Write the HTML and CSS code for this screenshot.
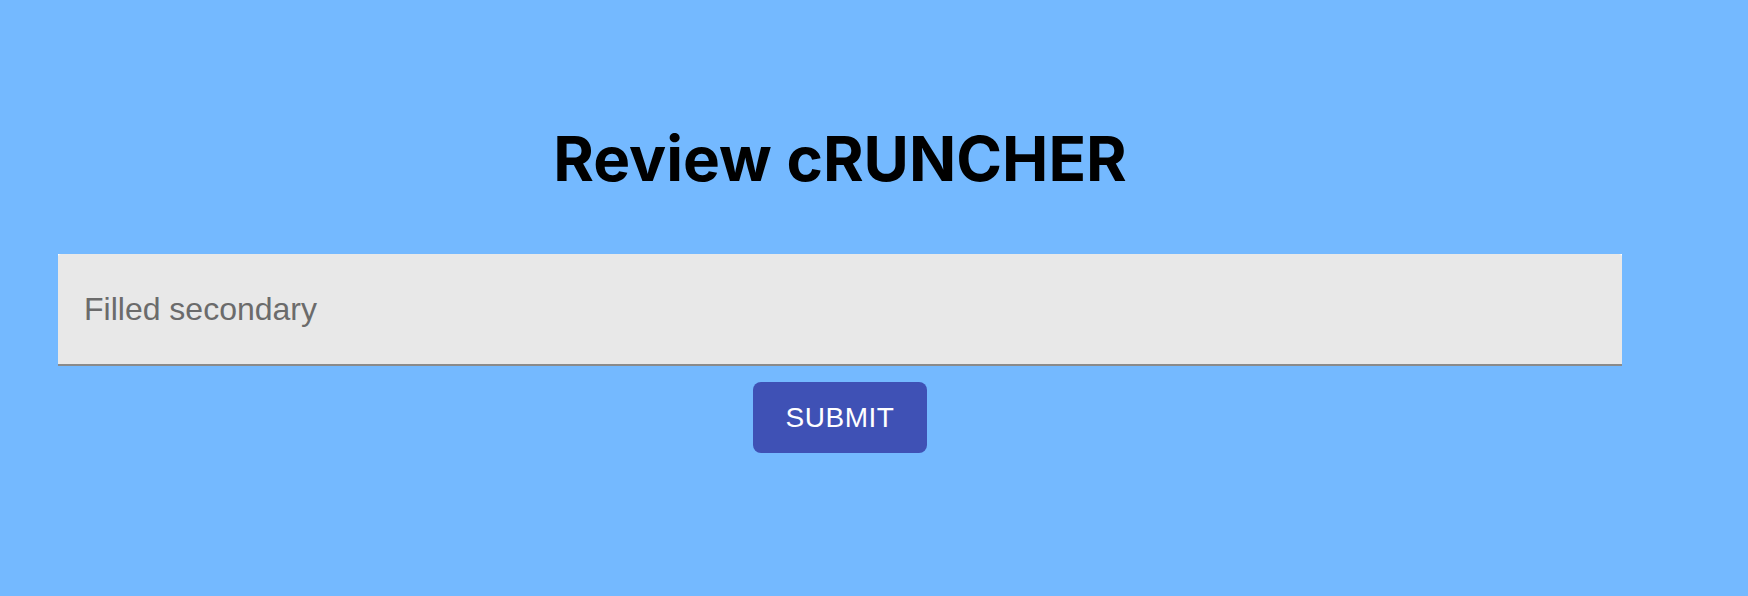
FILE: index.html
```html
<!DOCTYPE html>
<html>
<head>
<meta charset="utf-8">
<link rel="stylesheet" href="styles.css">
</head>
<body>
<main class="page">
  <h1 class="title">Review cRUNCHER</h1>
  <form class="form">
    <div class="field">
      <input class="field-input" type="text" placeholder="Filled secondary">
    </div>
    <button class="submit" type="button">SUBMIT</button>
  </form>
</main>
</body>
</html>
```

FILE: styles.css
```css
html, body {
  margin: 0;
  padding: 0;
  background: #74b9ff;
  height: 100%;
}
.page {
  display: flex;
  flex-direction: column;
  padding: 128px 126px 0 58px;
}
.title {
  margin: 0;
  text-align: center;
  font-family: "Inter", sans-serif;
  font-weight: 700;
  font-size: 62px;
  line-height: 1;
  color: #000;
}
.form {
  display: flex;
  flex-direction: column;
  align-items: center;
  gap: 16px;
  margin-top: 64px;
}
.field {
  align-self: stretch;
  background: #fff;
}
.field-input {
  display: block;
  box-sizing: border-box;
  width: 100%;
  height: 112px;
  margin: 0;
  padding: 39px 26px 39px 26px;
  border: none;
  border-bottom: 2px solid #8a8a8a;
  border-radius: 3px 3px 0 0;
  background: #e8e8e8;
  font-family: "Liberation Sans", Arial, sans-serif;
  font-size: 32px;
  line-height: 1;
  color: #222;
  outline: none;
}
.field-input::placeholder {
  color: #6b6b6b;
  opacity: 1;
}
.submit {
  box-sizing: border-box;
  height: 71px;
  padding: 0 33px;
  border: none;
  border-radius: 8px;
  background: #3f51b5;
  color: #fff;
  font-family: "Liberation Sans", Arial, sans-serif;
  font-size: 28px;
  line-height: 1;
  letter-spacing: 0.5px;
  cursor: pointer;
}
```
